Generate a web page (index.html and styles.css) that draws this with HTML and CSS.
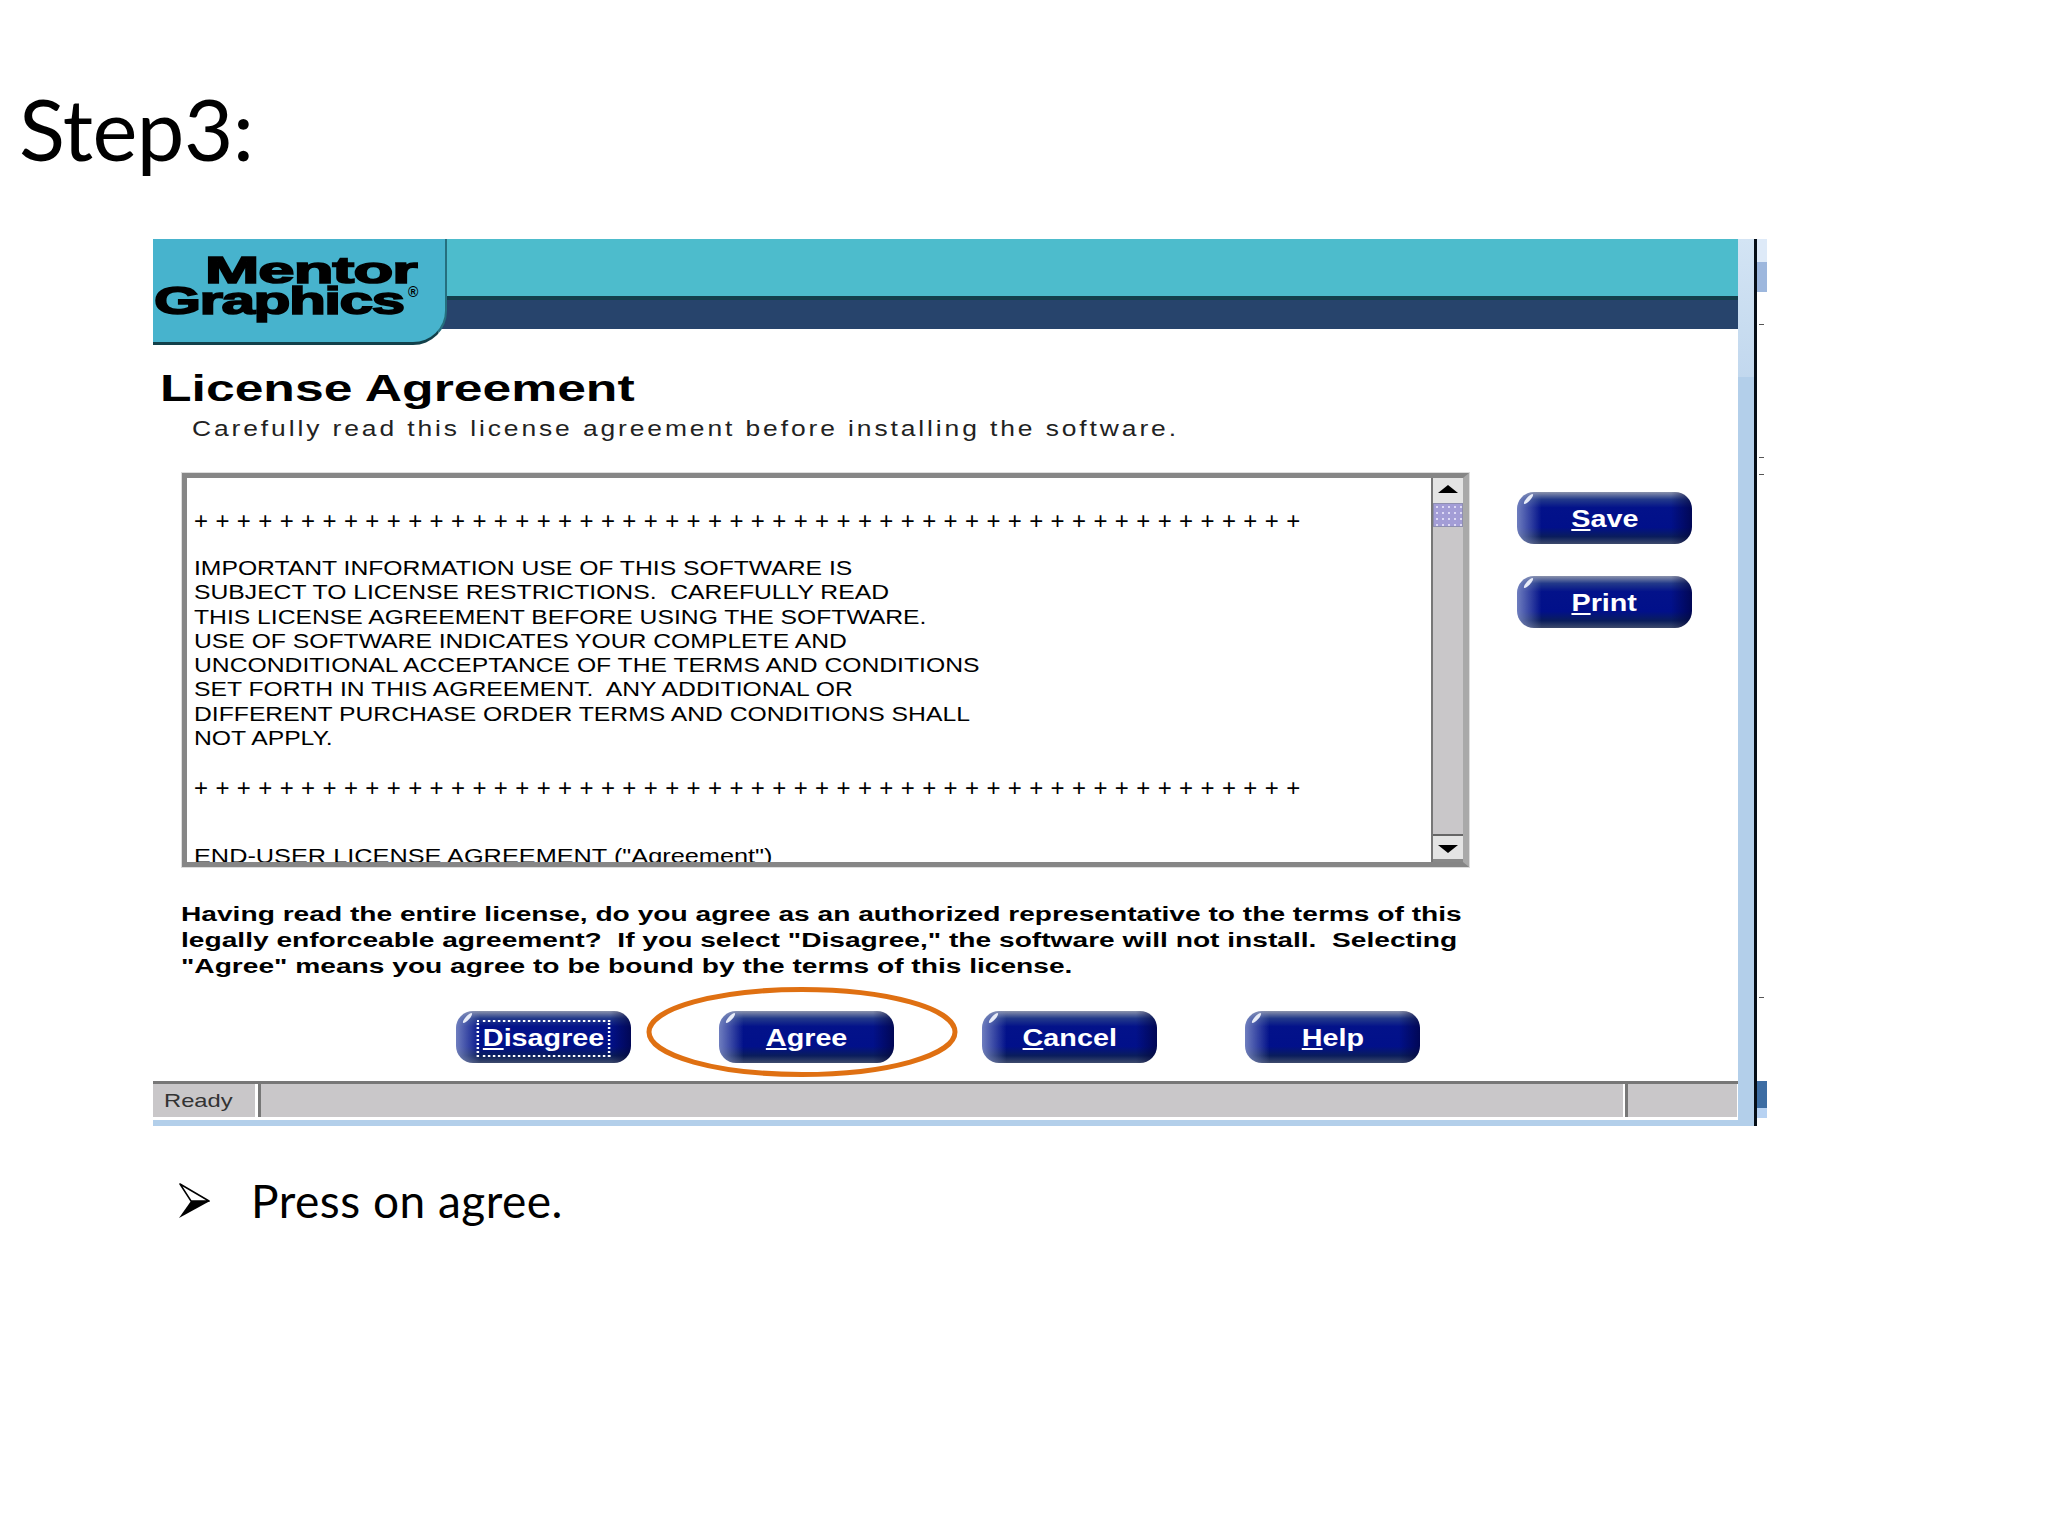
FILE: index.html
```html
<!DOCTYPE html>
<html lang="en">
<head>
  <meta charset="UTF-8" />
  <title>Step3</title>
  <link rel="stylesheet" href="styles.css">
</head>
<body>

  <h1 class="slide-title">Step3:</h1>

  <div class="window">
    <div class="pane">
      <!-- banner -->
      <div class="banner">
        <div class="logo">
          <span class="logo-mentor">Mentor</span>
          <span class="logo-graphics">Graphics</span>
          <span class="logo-mark">®</span>
        </div>
        <div class="banner-bar">
          <div class="bar-teal"></div>
        </div>
      </div>

      <!-- heading -->
      <div class="heading">
        <h2 class="stretch">License Agreement</h2>
        <p class="stretch">Carefully read this license agreement before installing the software.</p>
      </div>

      <!-- license text + save/print -->
      <div class="content">
        <div class="listbox">
          <div class="license">
            <div class="plus-row">++++++++++++++++++++++++++++++++++++++++++++++++++++</div>
            <div class="license-lines stretch">IMPORTANT INFORMATION USE OF THIS SOFTWARE IS
SUBJECT TO LICENSE RESTRICTIONS.  CAREFULLY READ
THIS LICENSE AGREEMENT BEFORE USING THE SOFTWARE.
USE OF SOFTWARE INDICATES YOUR COMPLETE AND
UNCONDITIONAL ACCEPTANCE OF THE TERMS AND CONDITIONS
SET FORTH IN THIS AGREEMENT.  ANY ADDITIONAL OR
DIFFERENT PURCHASE ORDER TERMS AND CONDITIONS SHALL
NOT APPLY.</div>
            <div class="plus-row plus-row-end">++++++++++++++++++++++++++++++++++++++++++++++++++++</div>
            <div class="license-end stretch">END-USER LICENSE AGREEMENT ("Agreement")</div>
          </div>
          <div class="scrollbar">
            <div class="scroll-btn"><span class="arrow-up"></span></div>
            <div class="scroll-thumb"></div>
            <div class="scroll-track"></div>
            <div class="scroll-btn scroll-btn-down"><span class="arrow-down"></span></div>
          </div>
        </div>
        <div class="side-buttons">
          <button class="btn"><span><u>S</u>ave</span></button>
          <button class="btn"><span><u>P</u>rint</span></button>
        </div>
      </div>

      <div class="agreement stretch">Having read the entire license, do you agree as an authorized representative to the terms of this
legally enforceable agreement?  If you select "Disagree," the software will not install.  Selecting
"Agree" means you agree to be bound by the terms of this license.</div>

      <div class="actions">
        <button class="btn btn-focus"><span><u>D</u>isagree</span></button>
        <button class="btn"><span><u>A</u>gree</span></button>
        <button class="btn"><span><u>C</u>ancel</span></button>
        <button class="btn"><span><u>H</u>elp</span></button>
        <svg class="highlight" viewBox="0 0 312 90"><ellipse cx="156" cy="45" rx="153" ry="42.5" /></svg>
      </div>

      <div class="statusbar">
        <div class="status-ready"><span>Ready</span></div>
        <div class="status-main"></div>
        <div class="status-end"></div>
      </div>
      <div class="band"></div>
    </div>

    <div class="strip"><div class="strip-light"></div></div>
    <div class="black-line"></div>
    <div class="edge">
      <div class="edge-top"></div>
      <div class="edge-patch"></div>
      <div class="edge-dots">
        <i style="top: 85px"></i>
        <i style="top: 218px"></i>
        <i style="top: 235px"></i>
        <i style="top: 758px"></i>
      </div>
      <div class="edge-bottom"></div>
    </div>
  </div>

  <div class="bullet">
    <svg class="bullet-arrow" viewBox="0 0 32 36">
      <path d="M1 1 L30 18 L12 18 Z" fill="#fff" stroke="#000" stroke-width="1.5" stroke-linejoin="round" />
      <path d="M0 35 L31 18 L12 18 Z" fill="#000" />
    </svg>
    <span>Press on agree.</span>
  </div>

</body>
</html>
```

FILE: styles.css
```css
:root {
  --teal: #4dbccc;
  --logo: #47b3cd;
  --navy: #27446c;
  --strip: #b3cfea;
  --status: #c9c7c9;
  --frame: #868686;
}

body {
  margin: 0;
  background: #fff;
  color: #000;
  font-family: "Liberation Sans", Arial, sans-serif;
  overflow: hidden;
}

.slide-title {
  margin: 0;
  height: 239px;
  padding: 80px 0 0 19px;
  box-sizing: border-box;
  font-family: Lato, sans-serif;
  font-size: 85px;
  font-weight: 400;
  line-height: 96px;
  letter-spacing: -0.5px;
}

.stretch {
  width: fit-content;
  transform-origin: left center;
  white-space: pre;
}

.window {
  display: flex;
  margin-left: 153px;
  height: 887px;
}

.pane {
  width: 1585px;
  display: flex;
  flex-direction: column;
  background: #fff;
}

/* banner */
.banner {
  display: flex;
  height: 106px;
  background: linear-gradient(180deg, transparent 61px, var(--navy) 61px, var(--navy) 90px, transparent 90px);
}

.logo {
  width: 294px;
  height: 106px;
  box-sizing: border-box;
  background: var(--logo);
  border-right: 2px solid #256f7e;
  border-bottom: 3px solid #12404a;
  border-bottom-right-radius: 34px;
  position: relative;
  color: #000;
  font-weight: bold;
  flex: none;
}

.logo span {
  position: absolute;
  display: block;
  transform-origin: left top;
  -webkit-text-stroke: 1.6px #000;
  line-height: 1;
}

.logo-mentor {
  left: 52px;
  top: 13px;
  font-size: 37px;
  transform: scaleX(1.76);
  letter-spacing: -0.5px;
}

.logo-graphics {
  left: 1px;
  top: 42px;
  font-size: 39px;
  transform: scaleX(1.55);
  letter-spacing: -1px;
}

.logo .logo-mark {
  left: 255px;
  top: 46px;
  font-size: 14px;
  -webkit-text-stroke: 0;
}

.banner-bar {
  flex: 1;
}

.bar-teal {
  height: 61px;
  box-sizing: border-box;
  background: var(--teal);
  border-bottom: 4px solid #123f4c;
}

/* heading */
.heading {
  height: 128px;
  box-sizing: border-box;
  padding: 24px 0 0 7px;
}

.heading h2 {
  margin: 0;
  font-size: 37px;
  line-height: 40px;
  transform: scaleX(1.396);
}

.heading p {
  margin: 5px 0 0 32px;
  font-size: 22px;
  line-height: 30px;
  color: #222;
  letter-spacing: 2.42px;
  transform: scaleX(1.2);
}

/* license box */
.content {
  display: flex;
  padding-left: 29px;
}

.listbox {
  width: 1287px;
  height: 394px;
  box-sizing: border-box;
  display: flex;
  border: 5px solid var(--frame);
  border-right-color: #a9a9a9;
  border-right-width: 6px;
  overflow: hidden;
  outline: 1px solid #ddd;
}

.license {
  flex: 1;
  overflow: hidden;
  padding: 31px 0 0 7px;
  min-width: 0;
}

.plus-row {
  font-size: 24px;
  line-height: 24px;
  letter-spacing: 7.4px;
  white-space: nowrap;
}

.license-lines {
  margin-top: 23px;
  font-size: 20px;
  line-height: 24.3px;
  transform: scaleX(1.235);
}

.plus-row-end {
  margin-top: 26px;
}

.license-end {
  margin-top: 44px;
  font-size: 20px;
  line-height: 24px;
  transform: scaleX(1.265);
}

.scrollbar {
  width: 32px;
  flex: none;
  display: flex;
  flex-direction: column;
  background: var(--status);
  border-left: 2px solid #777;
  box-sizing: border-box;
}

.scroll-btn {
  height: 25px;
  padding-bottom: 3px;
  background: #e4e4e4;
  display: flex;
  align-items: center;
  justify-content: center;
  flex: none;
  box-sizing: border-box;
}

.scroll-btn-down {
  border-top: 2px solid #666;
  border-bottom: 3px solid #888;
  height: 28px;
  padding: 2px 0 0;
}

.arrow-up,
.arrow-down {
  width: 0;
  height: 0;
  border-left: 10px solid transparent;
  border-right: 10px solid transparent;
}

.arrow-up { border-bottom: 8px solid #000; }
.arrow-down { border-top: 8px solid #000; }

.scroll-thumb {
  height: 24px;
  flex: none;
  background-color: #a39dd6;
  background-image: radial-gradient(#ddd9f5 1px, transparent 1.4px);
  background-size: 6px 6px;
  border: 1px solid #8f8fb0;
  box-sizing: border-box;
}

.scroll-track {
  flex: 1;
}

/* buttons */
.side-buttons {
  display: flex;
  flex-direction: column;
  gap: 32px;
  margin: 19px 0 0 48px;
}

.btn {
  width: 175px;
  height: 52px;
  padding: 2px 0 0;
  border: none;
  border-radius: 17px;
  position: relative;
  color: #fff;
  font-family: "Liberation Sans", Arial, sans-serif;
  font-size: 23px;
  font-weight: bold;
  background:
    linear-gradient(90deg, rgba(130, 145, 200, 0.85) 0, rgba(60, 80, 160, 0) 14%, rgba(0, 0, 40, 0) 88%, rgba(0, 0, 50, 0.6) 100%),
    linear-gradient(180deg, #8b93ac 0, #233a8a 14%, #03128a 30%, #01108a 68%, #0a1d5c 86%, #3d4a6c 100%);
}

.btn::before {
  content: "";
  position: absolute;
  left: 5px;
  top: 5px;
  width: 13px;
  height: 4px;
  border-radius: 50%;
  background: #e8ecf8;
  transform: rotate(-48deg);
}

.btn span {
  display: inline-block;
  transform: scaleX(1.25);
}

.btn-focus span {
  outline: 2px dotted #fff;
  outline-offset: 3px;
}

.agreement {
  margin: 34px 0 0 28px;
  font-size: 20px;
  font-weight: bold;
  line-height: 26px;
  transform: scaleX(1.407);
}

.actions {
  display: flex;
  gap: 88px;
  margin-top: 32px;
  padding-left: 303px;
  position: relative;
}

.highlight {
  position: absolute;
  left: 493px;
  top: -24px;
  width: 312px;
  height: 90px;
  fill: none;
  stroke: #df7012;
  stroke-width: 5px;
}

/* status bar */
.statusbar {
  display: flex;
  height: 39px;
  margin-top: 18px;
  box-sizing: border-box;
  border-top: 3px solid #777;
  background: #fff;
}

.status-ready,
.status-main,
.status-end {
  height: 33px;
  background: var(--status);
}

.status-ready {
  width: 102px;
  font-size: 19px;
  line-height: 33px;
  color: #333;
  padding-left: 11px;
  box-sizing: border-box;
  margin-right: 3px;
}

.status-ready span {
  display: inline-block;
  transform-origin: left center;
  transform: scaleX(1.25);
}

.status-main {
  flex: 1;
  border-left: 3px solid #777;
  margin-right: 2px;
}

.status-end {
  width: 109px;
  border-left: 3px solid #777;
  margin-right: 1px;
}

.band {
  height: 6px;
  background: var(--strip);
}

/* window edge */
.strip {
  width: 16px;
  background: var(--strip);
}

.strip-light {
  height: 138px;
  background: linear-gradient(180deg, #d3e4f4, #c2d8ee);
}

.black-line {
  width: 3px;
  background: #050d16;
}

.edge {
  width: 10px;
  display: flex;
  flex-direction: column;
  position: relative;
}

.edge-top {
  height: 23px;
  background: #deeaf8;
}

.edge-patch {
  height: 30px;
  background: #9db7dd;
}

.edge-dots i {
  position: absolute;
  left: 2px;
  width: 5px;
  height: 1px;
  background: #555;
}

.edge-bottom {
  margin-top: auto;
  margin-bottom: 8px;
  height: 37px;
  background: linear-gradient(180deg, #3d6da3 0, #3d6da3 72%, #b7d2f2 73%);
}

/* bullet */
.bullet {
  display: flex;
  align-items: center;
  margin: 47px 0 0 179px;
  font-family: Lato, sans-serif;
  font-size: 46px;
  letter-spacing: 0.5px;
  line-height: 56px;
  color: #000;
}

.bullet-arrow {
  width: 32px;
  height: 36px;
  flex: none;
  margin-right: 40px;
}
```
